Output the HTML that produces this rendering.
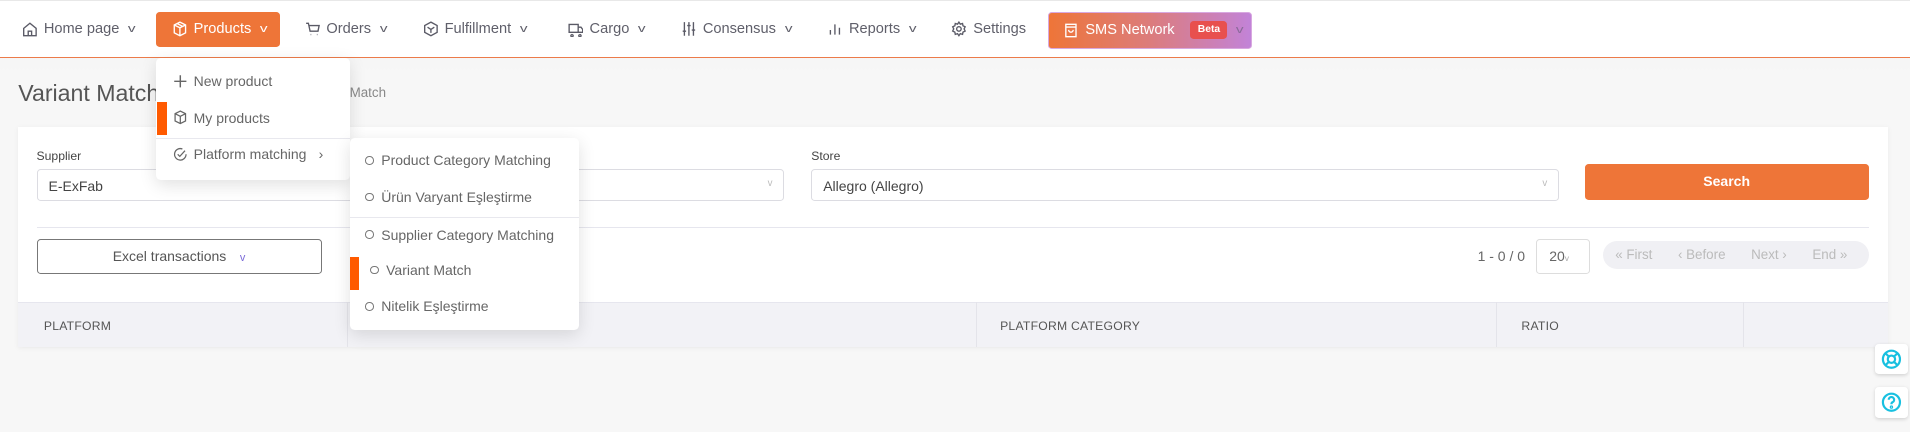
<!DOCTYPE html>
<html><head><meta charset="utf-8"><style>
*{box-sizing:border-box;margin:0;padding:0}
html,body{width:1910px;height:432px;overflow:hidden}
body{background:#f5f5f5;font-family:"Liberation Sans",sans-serif;color:#555}
#root{zoom:1.21811;width:1568px;height:355px;position:relative;background:linear-gradient(#efefef,#f7f7f7 60px,#f7f7f7)}
.a{position:absolute}
.top{left:0;top:0;width:1568px;height:48px;background:#fff;border-top:1px solid #e8e8e8;border-bottom:1.5px solid #ec7b4a}
.nav{top:17px;font-size:12px;color:#5f5f6a;white-space:nowrap;display:flex;align-items:center;gap:5px}
.nav svg{width:13px;height:13px;fill:none;stroke:#5a5a66;stroke-width:1.2}
.chev{font-size:9px;transform:scaleX(1.4);display:inline-block;margin-left:3px}
.prod{left:128px;top:10px;width:102px;height:29px;background:#ee7538;border-radius:3px}
.sms{left:860px;top:10px;width:168px;height:30px;border-radius:3px;background:linear-gradient(90deg,#ee7538,#dc7c7c 50%,#c283d8);border:1px solid #d8a8e0}
.card{left:15px;top:104px;width:1535px;height:181px;background:#fff;box-shadow:0 1px 4px rgba(0,0,0,.06)}
.lbl{font-size:10px;color:#444;top:122px}
.sel{height:26px;border:1px solid #dcdce2;border-radius:3px;background:#fff;font-size:11.5px;color:#444;padding:6px 9px}
.th{font-size:10px;color:#555;top:262px;letter-spacing:.2px}
.menu{background:#fff;border-radius:4px;box-shadow:0 4px 14px rgba(0,0,0,.12);font-size:11.5px;color:#666}
.mi{position:absolute;left:0;right:0;white-space:nowrap;display:flex;align-items:center}
.mi svg{width:12px;height:12px;fill:none;stroke:#666;stroke-width:1.2;margin-right:5px}
.circ{display:inline-block;width:7px;height:7px;border:1px solid #777;border-radius:50%;margin-right:6px}
.bar{position:absolute;background:#ff5a00;width:8px}
.sep{position:absolute;left:0;right:0;height:1px;background:#e8e8ee}
</style></head><body><div id="root">
<div class="a top"></div>
<div class="a prod"></div>
<div class="a nav" style="left:18px"><svg viewBox="0 0 14 14"><path d="M1.5 6.5L7 2l5.5 4.5V13h-11z M5.5 13V9h3v4"/></svg>Home page<span class="chev">v</span></div>
<div class="a nav" style="left:141px;color:#fff"><svg viewBox="0 0 14 14" style="stroke:#fff"><path d="M7 1l5 2.5v7L7 13l-5-2.5v-7z M2 3.5L7 6l5-2.5 M7 6v7 M4.5 2.2l5 2.6"/></svg>Products<span class="chev">v</span></div>
<div class="a nav" style="left:250px"><svg viewBox="0 0 14 14"><path d="M1 2h2l1.5 7h7l1-5H4 M5 12h.5 M10.5 12h.5"/></svg>Orders<span class="chev">v</span></div>
<div class="a nav" style="left:347px"><svg viewBox="0 0 14 14"><path d="M7 1l5.5 3v6L7 13l-5.5-3V4z M4 5.5l3 2 3-2 M7 7.5v3"/></svg>Fulfillment<span class="chev">v</span></div>
<div class="a nav" style="left:466px"><svg viewBox="0 0 14 14"><path d="M1 3h8v7H1z M9 5.5h2.5l1.5 2v2.5H9 M3.5 12a1 1 0 1 0 .1 0 M10.5 12a1 1 0 1 0 .1 0"/></svg>Cargo<span class="chev">v</span></div>
<div class="a nav" style="left:559px"><svg viewBox="0 0 14 14"><path d="M3 1v12 M7 1v12 M11 1v12 M1.5 9h3 M5.5 4h3 M9.5 8h3"/></svg>Consensus<span class="chev">v</span></div>
<div class="a nav" style="left:679px"><svg viewBox="0 0 14 14"><path d="M3 12V8 M7 12V3 M11 12V6"/></svg>Reports<span class="chev">v</span></div>
<div class="a nav" style="left:781px"><svg viewBox="0 0 14 14"><circle cx="7" cy="7" r="2"/><path d="M7 1l1.2 1.8 2-.6.4 2 1.9.9-.9 1.9.9 1.9-1.9.9-.4 2-2-.6L7 13l-1.2-1.8-2 .6-.4-2-1.9-.9.9-1.9-.9-1.9 1.9-.9.4-2 2 .6z"/></svg>Settings</div>
<div class="a sms"></div>
<div class="a nav" style="left:873px;color:#fff"><svg viewBox="0 0 14 14" style="stroke:#fff"><path d="M2.5 2h9v11h-9z M2.5 4.5h9 M5 7a2 2 0 0 0 4 0"/></svg>SMS Network<span style="margin-left:8px;background:#e8504e;color:#fff;font-size:8.5px;font-weight:bold;padding:3px 6px;border-radius:3px">Beta</span><span class="chev" style="color:#8a6a9a">v</span></div>

<div class="a" style="left:15px;top:66px;font-size:19px;color:#555">Variant Match</div>
<div class="a" style="left:287px;top:70px;font-size:11px;color:#888">Match</div>

<div class="a card"></div>
<div class="a lbl" style="left:30px">Supplier</div>
<div class="a sel" style="left:30px;top:139px;width:614px">E-ExFab<span style="float:right;color:#bbb;font-size:8px">v</span></div>
<div class="a lbl" style="left:666px">Store</div>
<div class="a sel" style="left:666px;top:139px;width:614px">Allegro (Allegro)<span style="float:right;color:#bbb;font-size:8px">v</span></div>
<div class="a" style="left:1301px;top:135px;width:233px;height:29px;background:#ee7538;border-radius:3px;color:#fff;font-size:11.5px;font-weight:bold;text-align:center;line-height:29px">Search</div>
<div class="a" style="left:30px;top:186px;width:1504px;height:1px;background:#e6e6ee"></div>
<div class="a" style="left:30px;top:196px;width:234px;height:29px;border:1px solid #777;border-radius:3px;font-size:11.5px;color:#555;text-align:center;line-height:27px">Excel transactions <span style="color:#7a6ad8;font-size:9px;margin-left:8px">v</span></div>
<div class="a" style="left:1213px;top:204px;font-size:11.5px;color:#666">1 - 0 / 0</div>
<div class="a" style="left:1261px;top:196px;width:44px;height:29px;border:1px solid #ddd;border-radius:3px;font-size:11.5px;color:#666;padding:7px 0 0 10px">20<span style="font-size:7px;color:#aaa">v</span></div>
<div class="a" style="left:1316px;top:198px;width:218px;height:23px;background:#f0f0f4;border-radius:12px;font-size:11px;color:#bbb;line-height:23px;white-space:nowrap"><span style="margin-left:10px">« First</span><span style="margin-left:21px">‹ Before</span><span style="margin-left:21px">Next ›</span><span style="margin-left:21px">End »</span></div>
<div class="a" style="left:15px;top:248px;width:1535px;height:37px;background:#f2f2f6;border-top:1px solid #e6e6ee"></div>
<div class="a" style="left:285px;top:248px;width:1px;height:37px;background:#e4e4ea"></div>
<div class="a" style="left:801px;top:248px;width:1px;height:37px;background:#e4e4ea"></div>
<div class="a" style="left:1228px;top:248px;width:1px;height:37px;background:#e4e4ea"></div>
<div class="a" style="left:1431px;top:248px;width:1px;height:37px;background:#e4e4ea"></div>
<div class="a th" style="left:36px">PLATFORM</div>
<div class="a th" style="left:821px">PLATFORM CATEGORY</div>
<div class="a th" style="left:1249px">RATIO</div>

<div class="a menu" style="left:128px;top:48px;width:159px;height:100px">
<div class="mi" style="top:12px;left:14px"><svg viewBox="0 0 12 12"><path d="M6 1v10M1 6h10"/></svg>New product</div>
<div class="bar" style="left:1px;top:36px;height:27px"></div>
<div class="mi" style="top:42px;left:14px"><svg viewBox="0 0 14 14"><path d="M7 1l5 2.5v7L7 13l-5-2.5v-7z M2 3.5L7 6l5-2.5 M7 6v7"/></svg>My products</div>
<div class="sep" style="top:65px"></div>
<div class="mi" style="top:72px;left:14px"><svg viewBox="0 0 14 14"><path d="M12.5 7A5.5 5.5 0 1 1 9 1.9 M4.5 7l2 2 5-5.5"/></svg>Platform matching <span style="margin-left:10px">›</span></div>
</div>
<div class="a menu" style="left:287px;top:113px;width:188px;height:158px">
<div class="mi" style="top:12px;left:13px"><span class="circ"></span>Product Category Matching</div>
<div class="mi" style="top:42px;left:13px"><span class="circ"></span>Ürün Varyant Eşleştirme</div>
<div class="sep" style="top:65px"></div>
<div class="mi" style="top:73px;left:13px"><span class="circ"></span>Supplier Category Matching</div>
<div class="bar" style="left:0;top:98px;height:27px"></div>
<div class="mi" style="top:102px;left:17px"><span class="circ"></span>Variant Match</div>
<div class="mi" style="top:132px;left:13px"><span class="circ"></span>Nitelik Eşleştirme</div>
</div>

<div class="a" style="left:1539px;top:282px;width:27px;height:25px;background:#fff;border-radius:3px;box-shadow:0 1px 3px rgba(0,0,0,.15)"><svg width="27" height="25" viewBox="0 0 27 25" fill="none" stroke="#18c0e0" stroke-width="1.8"><circle cx="13.5" cy="12.5" r="7"/><circle cx="13.5" cy="12.5" r="3"/><path d="M8.5 7.5l3 3M18.5 7.5l-3 3M8.5 17.5l3-3M18.5 17.5l-3-3"/></svg></div>
<div class="a" style="left:1539px;top:318px;width:27px;height:25px;background:#fff;border-radius:3px;box-shadow:0 1px 3px rgba(0,0,0,.15)"><svg width="27" height="25" viewBox="0 0 27 25" fill="none" stroke="#18c0e0" stroke-width="1.8"><circle cx="13.5" cy="12.5" r="7"/><path d="M11.3 10.5a2.2 2.2 0 1 1 3 2c-.8.4-.8 1-.8 1.7"/><circle cx="13.5" cy="16.5" r=".5"/></svg></div>
</div></body></html>
